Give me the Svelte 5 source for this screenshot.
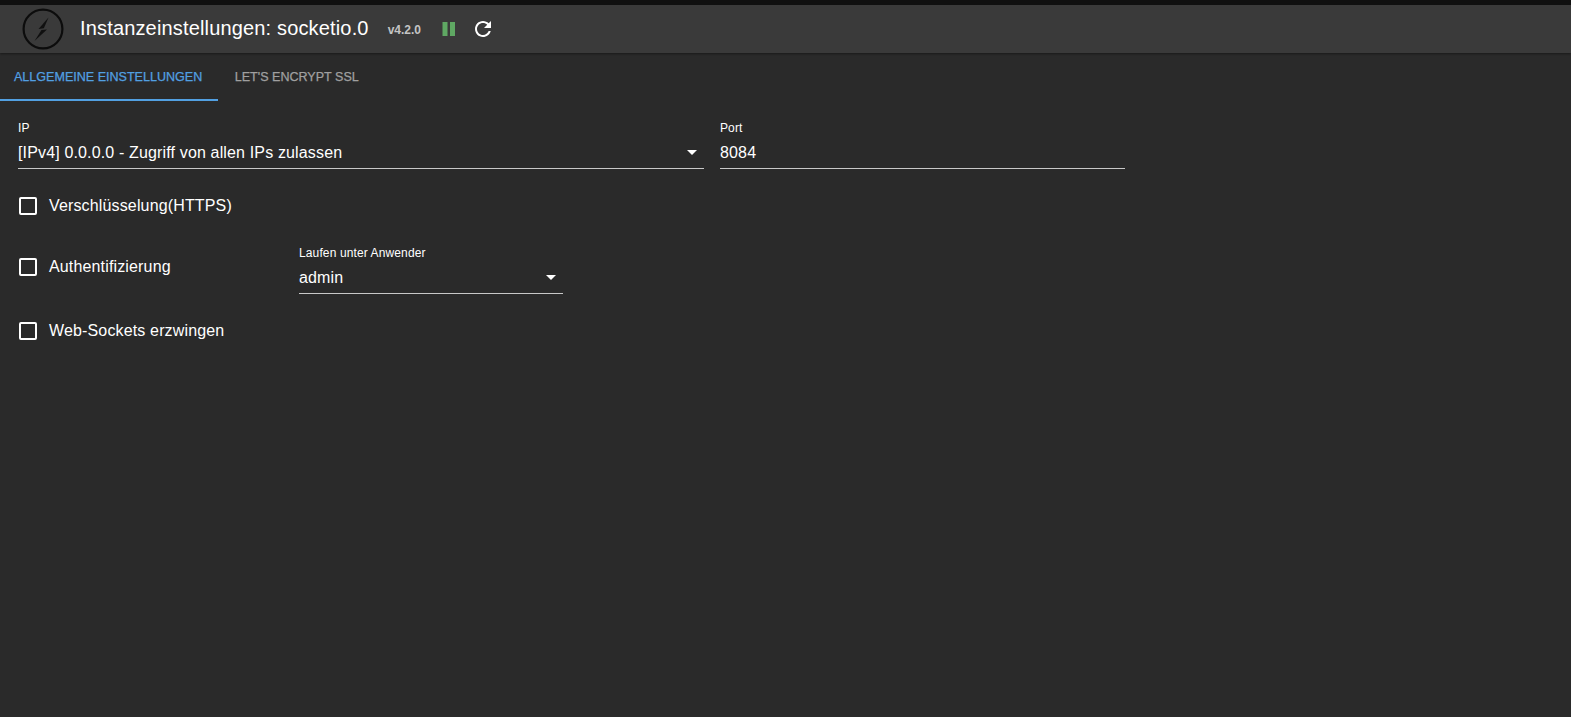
<script lang="ts">
  const tabs = [
    { label: "Allgemeine Einstellungen", active: true },
    { label: "Let's Encrypt SSL", active: false },
  ];
</script>

<div class="page">
  <header class="bar">
    <svg class="logo" width="42" height="42" viewBox="0 0 42 42">
      <circle cx="21" cy="21" r="19.4" fill="none" stroke="#0c0c0c" stroke-width="2.2" />
      <path d="M26.5 9.5 L16.5 21 L21.8 20.2 Z" fill="#101010" />
      <path d="M25 21.5 L19.5 22 L12.5 33 Z" fill="#101010" />
    </svg>
    <h1 class="title">Instanzeinstellungen: socketio.0</h1>
    <span class="version">v4.2.0</span>
    <svg class="pause" width="24" height="24" viewBox="0 0 24 24">
      <rect x="5.5" y="5" width="5" height="14" fill="#5fa863" />
      <rect x="13" y="5" width="5" height="14" fill="#5fa863" />
    </svg>
    <svg class="reload" width="24" height="24" viewBox="0 0 24 24">
      <path fill="#fff" d="M17.65 6.35C16.2 4.9 14.21 4 12 4c-4.42 0-7.99 3.58-7.99 8s3.57 8 7.99 8c3.73 0 6.84-2.55 7.73-6h-2.08c-.82 2.33-3.04 4-5.65 4-3.31 0-6-2.69-6-6s2.69-6 6-6c1.66 0 3.14.69 4.22 1.78L13 11h7V4l-2.35 2.35z" />
    </svg>
  </header>

  <nav class="tabs">
    {#each tabs as tab}
      <div class="tab" class:active={tab.active}>{tab.label}</div>
    {/each}
  </nav>

  <main class="form">
    <div class="row first">
      <div class="field ip">
        <span class="label">IP</span>
        <div class="value">
          <span>[IPv4] 0.0.0.0 - Zugriff von allen IPs zulassen</span>
          <i class="caret"></i>
        </div>
      </div>
      <div class="field port">
        <span class="label">Port</span>
        <div class="value"><span>8084</span></div>
      </div>
    </div>

    <div class="row check-https">
      <span class="box"></span>
      <span class="check-label">Verschlüsselung(HTTPS)</span>
    </div>

    <div class="row check-auth">
      <div class="auth-left">
        <span class="box"></span>
        <span class="check-label">Authentifizierung</span>
      </div>
      <div class="field user">
        <span class="label">Laufen unter Anwender</span>
        <div class="value">
          <span>admin</span>
          <i class="caret"></i>
        </div>
      </div>
    </div>

    <div class="row check-ws">
      <span class="box"></span>
      <span class="check-label">Web-Sockets erzwingen</span>
    </div>
  </main>
</div>

<style>
  :global(body) {
    margin: 0;
    background: #2a2a2a;
  }

  .page {
    height: 717px;
    overflow: hidden;
    background: #2a2a2a;
    color: #fff;
    font-family: "Liberation Sans", Arial, sans-serif;
    border-top: 5px solid #101010;
    box-sizing: border-box;
  }

  .bar {
    height: 48px;
    display: flex;
    align-items: center;
    padding-left: 22px;
    background: #3a3a3a;
    box-shadow: 0 1px 2px rgba(0, 0, 0, 0.4);
    box-sizing: border-box;
  }

  .logo {
    flex: none;
  }

  .title {
    margin: 0 0 0 16px;
    font-size: 20px;
    font-weight: 400;
    line-height: 46px;
    height: 48px;
    letter-spacing: 0.16px;
  }

  .version {
    margin-left: 19px;
    font-size: 12px;
    font-weight: 700;
    color: #c4c4c4;
    padding-top: 2px;
  }

  .pause {
    margin-left: 16px;
  }

  .reload {
    margin-left: 10px;
  }

  .tabs {
    display: flex;
    height: 48px;
  }

  .tab {
    padding: 0 14px 2px;
    line-height: 48px;
    height: 46px;
    font-size: 12.55px;
    font-weight: 400;
    -webkit-text-stroke: 0.25px currentColor;
    text-transform: uppercase;
    color: #a0a0a0;
    margin-right: 3px;
  }

  .tab.active {
    color: #52a0e2;
    border-bottom: 2px solid #52a0e2;
    padding-bottom: 0;
    padding-right: 15.5px;
  }

  .form {
    padding: 20px 0 0 18px;
  }

  .row {
    display: flex;
  }

  .first {
    gap: 16px;
  }

  .field {
    display: flex;
    flex-direction: column;
  }

  .ip {
    width: 686px;
  }

  .port {
    width: 405px;
  }

  .user {
    width: 264px;
  }

  .label {
    font-size: 12px;
    line-height: 14px;
    height: 14px;
    letter-spacing: 0.12px;
  }

  .value {
    display: flex;
    align-items: center;
    justify-content: space-between;
    height: 31px;
    padding-top: 2px;
    font-size: 16px;
    letter-spacing: 0.15px;
    border-bottom: 1px solid #c8c8c8;
  }

  .caret {
    width: 0;
    height: 0;
    margin-right: 7px;
    border-left: 5px solid transparent;
    border-right: 5px solid transparent;
    border-top: 5px solid #fff;
  }

  .check-https,
  .check-ws {
    align-items: center;
    height: 24px;
  }

  .check-https {
    margin-top: 25px;
  }

  .check-auth {
    margin-top: 28px;
    align-items: flex-start;
  }

  .check-ws {
    margin-top: 25px;
  }

  .auth-left {
    display: flex;
    align-items: center;
    width: 281px;
    height: 42px;
  }

  .box {
    flex: none;
    width: 14px;
    height: 14px;
    margin: 0 12px 0 1px;
    border: 2px solid #fff;
    border-radius: 2px;
  }

  .check-label {
    font-size: 16px;
    letter-spacing: 0.15px;
  }
</style>
